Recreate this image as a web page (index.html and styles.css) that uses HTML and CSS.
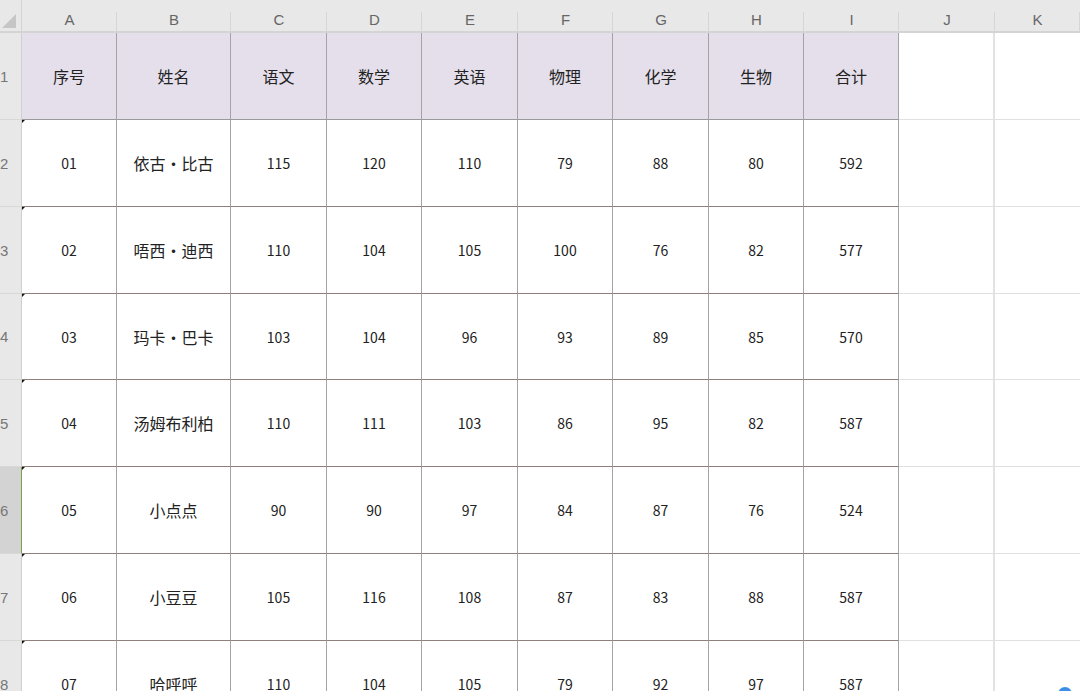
FILE: index.html
```html
<!DOCTYPE html>
<html lang="zh">
<head>
<meta charset="utf-8">
<link rel="stylesheet" href="styles.css">
</head>
<body>
<div class="sheet">
  <div class="corner"><span class="tri"></span></div>
  <div class="colh">A</div><div class="colh">B</div><div class="colh">C</div><div class="colh">D</div><div class="colh">E</div><div class="colh">F</div><div class="colh">G</div><div class="colh">H</div><div class="colh">I</div><div class="colh">J</div><div class="colh last">K</div>

  <div class="rowh">1</div>
  <div class="c head">序号</div><div class="c head">姓名</div><div class="c head">语文</div><div class="c head">数学</div><div class="c head">英语</div><div class="c head">物理</div><div class="c head">化学</div><div class="c head">生物</div><div class="c head">合计</div><div class="e"></div><div class="e last"></div>

  <div class="rowh">2</div>
  <div class="c mk">01</div><div class="c nm">依古・比古</div><div class="c">115</div><div class="c">120</div><div class="c">110</div><div class="c">79</div><div class="c">88</div><div class="c">80</div><div class="c">592</div><div class="e"></div><div class="e last"></div>

  <div class="rowh">3</div>
  <div class="c mk">02</div><div class="c nm">唔西・迪西</div><div class="c">110</div><div class="c">104</div><div class="c">105</div><div class="c">100</div><div class="c">76</div><div class="c">82</div><div class="c">577</div><div class="e"></div><div class="e last"></div>

  <div class="rowh">4</div>
  <div class="c mk">03</div><div class="c nm">玛卡・巴卡</div><div class="c">103</div><div class="c">104</div><div class="c">96</div><div class="c">93</div><div class="c">89</div><div class="c">85</div><div class="c">570</div><div class="e"></div><div class="e last"></div>

  <div class="rowh">5</div>
  <div class="c mk">04</div><div class="c nm">汤姆布利柏</div><div class="c">110</div><div class="c">111</div><div class="c">103</div><div class="c">86</div><div class="c">95</div><div class="c">82</div><div class="c">587</div><div class="e"></div><div class="e last"></div>

  <div class="rowh sel">6</div>
  <div class="c mk">05</div><div class="c nm">小点点</div><div class="c">90</div><div class="c">90</div><div class="c">97</div><div class="c">84</div><div class="c">87</div><div class="c">76</div><div class="c">524</div><div class="e"></div><div class="e last"></div>

  <div class="rowh">7</div>
  <div class="c mk">06</div><div class="c nm">小豆豆</div><div class="c">105</div><div class="c">116</div><div class="c">108</div><div class="c">87</div><div class="c">83</div><div class="c">88</div><div class="c">587</div><div class="e"></div><div class="e last"></div>

  <div class="rowh">8</div>
  <div class="c mk">07</div><div class="c nm">哈呼呼</div><div class="c">110</div><div class="c">104</div><div class="c">105</div><div class="c">79</div><div class="c">92</div><div class="c">97</div><div class="c">587</div><div class="e"></div><div class="e last"></div>
</div>
<div class="dot"></div>
</body>
</html>
```

FILE: styles.css
```css
html, body {
  margin: 0;
  padding: 0;
  background: #ffffff;
  overflow: hidden;
  width: 1080px;
  height: 691px;
}

.sheet {
  display: grid;
  grid-template-columns: 22px 95px 114px 96px 95px 96px 95px 96px 95px 95px 96px 85px;
  grid-template-rows: 33px 87px 87px 87px 86px 87px 87px 87px 87px;
  font-family: "Noto Sans CJK SC", "Noto Sans", sans-serif;
  font-size: 14px;
  color: #222222;
}

.corner {
  background: #e8e8e8;
  border-bottom: 2px solid #d4d4d4;
  border-right: 1px solid #d4d4d4;
  position: relative;
}

.tri {
  position: absolute;
  right: 5px;
  bottom: 3px;
  width: 0;
  height: 0;
  border-left: 14px solid transparent;
  border-bottom: 14px solid #c6c6c6;
}

.colh {
  background: #e8e8e8;
  border-bottom: 2px solid #d4d4d4;
  color: #666666;
  font-family: "Liberation Sans", "Noto Sans", sans-serif;
  font-size: 15px;
  display: flex;
  align-items: center;
  justify-content: center;
  padding-top: 8px;
  box-sizing: border-box;
  position: relative;
}

.colh::after {
  content: "";
  position: absolute;
  right: 0;
  top: 12px;
  bottom: 0;
  width: 1px;
  background: #d6d6d6;
}

.rowh {
  background: #e8e8e8;
  border-right: 1px solid #d0d0d0;
  border-bottom: 1px solid #d8d8d8;
  color: #777777;
  font-family: "Liberation Sans", "Noto Sans", sans-serif;
  font-size: 15px;
  display: flex;
  align-items: center;
  justify-content: flex-start;
  padding-left: 0;
  box-sizing: border-box;
}

.rowh.sel {
  background: #d3d3d3;
  border-right: 1px solid #7aa050;
}

.c {
  display: flex;
  align-items: center;
  justify-content: center;
  border-right: 1px solid #a4a4a4;
  border-bottom: 1px solid #8f807b;
  box-sizing: border-box;
  position: relative;
  white-space: nowrap;
}

.c.head {
  background: #e4dfeb;
  border-bottom: 1px solid #999999;
  font-size: 16px;
}

.c.nm {
  font-size: 16px;
}

.c.mk::before {
  content: "";
  position: absolute;
  left: 0;
  top: 0;
  width: 0;
  height: 0;
  border-top: 3px solid #111111;
  border-right: 3px solid transparent;
}

.e {
  border-right: 2px solid #e2e2e2;
  border-bottom: 1px solid #e0e0e0;
  box-sizing: border-box;
}

.e.last {
  border-right: none;
}

.dot {
  position: absolute;
  left: 1058px;
  top: 687px;
  width: 14px;
  height: 14px;
  border-radius: 50%;
  background: #3a8ee6;
}
```
